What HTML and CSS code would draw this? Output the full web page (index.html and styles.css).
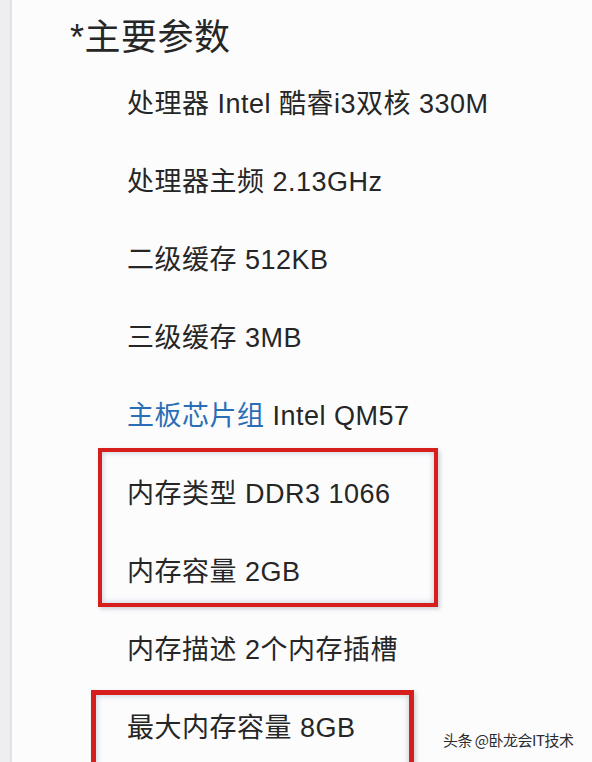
FILE: index.html
```html
<!DOCTYPE html>
<html lang="zh-CN">
<head>
    <meta charset="UTF-8">
    <meta name="viewport" content="width=device-width, initial-scale=1.0">
    <title>主要参数</title>
    <link rel="stylesheet" href="styles.css">
</head>
<body>
    <div class="strip"></div>
    <div id="page">
        <h1 class="title">*主要参数</h1>
        <ul class="params">
            <li>处理器 Intel 酷睿i3双核 330M</li>
            <li>处理器主频 2.13GHz</li>
            <li>二级缓存 512KB</li>
            <li>三级缓存 3MB</li>
            <li><span class="link">主板芯片组</span> Intel QM57</li>
            <li>内存类型 DDR3 1066</li>
            <li>内存容量 2GB</li>
            <li>内存描述 2个内存插槽</li>
            <li>最大内存容量 8GB</li>
        </ul>
        <div class="mark mark-one"></div>
        <div class="mark mark-two"></div>
        <div class="watermark">头条 @卧龙会IT技术</div>
    </div>
</body>
</html>
```

FILE: styles.css
```css
* {
  margin: 0;
  padding: 0;
  box-sizing: border-box;
}

html, body {
  height: 100%;
  overflow: hidden;
}

body {
  display: flex;
  background: #fcfcfd;
  font-family: 'Liberation Sans', 'Noto Sans CJK SC', sans-serif;
  color: #262626;
}

.strip {
  width: 12px;
  flex-shrink: 0;
  background: #eeeef0;
  border-right: 2px solid #e2e2e6;
}

#page {
  position: relative;
  flex: 1;
  padding-left: 58px;
}

.title {
  margin-top: 12px;
  font-size: 36px;
  font-weight: normal;
  line-height: 52px;
  height: 53px;
  letter-spacing: 0.5px;
}

.params {
  list-style: none;
  padding-left: 57px;
}

.params li {
  height: 78px;
  line-height: 78px;
  font-size: 27px;
  letter-spacing: 0.5px;
  white-space: nowrap;
}

.link {
  color: #2a6eb5;
}

/* red highlight boxes drawn over the list */
.mark {
  position: absolute;
  border: 4px solid #d61f1c;
  box-shadow: inset 0 0 6px rgba(110, 140, 165, 0.45), 2px 2px 4px rgba(120, 130, 140, 0.35);
}

.mark-one {
  left: 86px;
  top: 448px;
  width: 340px;
  height: 159px;
}

.mark-two {
  left: 79px;
  top: 690px;
  width: 323px;
  height: 100px;
  border-width: 5px;
}

.watermark {
  position: absolute;
  left: 431px;
  top: 729px;
  font-family: 'Noto Sans CJK SC', sans-serif;
  font-size: 15px;
  color: #2c2c2c;
  letter-spacing: -0.5px;
  text-shadow: 0 0 1px #ffffff;
}
```
